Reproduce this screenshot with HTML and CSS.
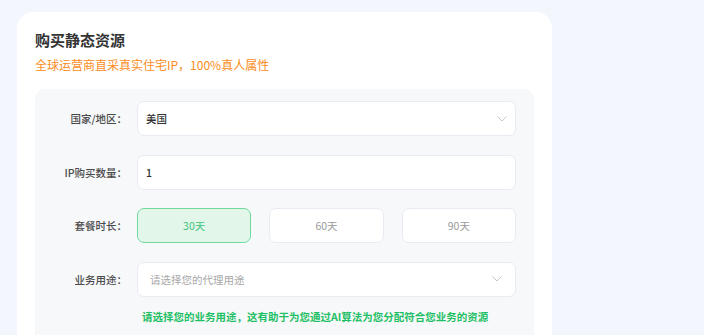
FILE: index.html
```html
<!DOCTYPE html>
<html lang="zh">
<head>
<meta charset="utf-8">
<link rel="stylesheet" href="styles.css">
</head>
<body>
<div class="card">
  <h1 class="title">购买静态资源</h1>
  <p class="subtitle">全球运营商直采真实住宅IP，100%真人属性</p>
  <div class="panel">
    <div class="row">
      <label class="label">国家/地区：</label>
      <div class="field select country">
        <span class="value">美国</span>
        <svg class="chev" width="10" height="6" viewBox="0 0 10 6"><polyline points="0.5,0.5 5,5 9.5,0.5" fill="none" stroke="#c4c8cf" stroke-width="1"/></svg>
      </div>
    </div>
    <div class="row">
      <label class="label">IP购买数量：</label>
      <div class="field"><span class="value">1</span></div>
    </div>
    <div class="row">
      <label class="label">套餐时长：</label>
      <div class="options">
        <div class="opt active">30天</div>
        <div class="opt">60天</div>
        <div class="opt">90天</div>
      </div>
    </div>
    <div class="row">
      <label class="label">业务用途：</label>
      <div class="field select">
        <span class="placeholder">请选择您的代理用途</span>
        <svg class="chev" width="10" height="6" viewBox="0 0 10 6"><polyline points="0.5,0.5 5,5 9.5,0.5" fill="none" stroke="#c4c8cf" stroke-width="1"/></svg>
      </div>
    </div>
    <div class="hint-row">
      <p class="hint">请选择您的业务用途，这有助于为您通过AI算法为您分配符合您业务的资源</p>
    </div>
  </div>
</div>
</body>
</html>
```
FILE: styles.css
```css
* { box-sizing: border-box; }
html, body { margin: 0; padding: 0; overflow: hidden; }
body {
  background: #f3f6fd;
  font-family: "Noto Sans CJK SC", "Noto Sans", sans-serif;
  padding: 12px 0 0 17px;
  height: 335px;
}
.card {
  width: 535px;
  height: 323px;
  overflow: hidden;
  background: #fff;
  border-radius: 16px 16px 0 0;
  padding: 18px 18px 0 18px;
}
.title {
  margin: 0;
  font-size: 15px;
  line-height: 20px;
  font-weight: 700;
  color: #333;
}
.subtitle {
  margin: 6px 0 0 0;
  font-size: 12px;
  line-height: 18px;
  color: #fb8c21;
}
.panel {
  margin-top: 15px;
  background: #f7f8fa;
  border-radius: 10px;
  padding: 12px 18px 20px 0;
  display: grid;
  row-gap: 18.6px;
}
.row {
  display: grid;
  grid-template-columns: 92px 1fr;
  column-gap: 10px;
  align-items: center;
  height: 35px;
}
.label {
  text-align: right;
  font-size: 10.5px;
  font-weight: 500;
  color: #4a4a4a;
  white-space: nowrap;
}
.field {
  height: 35px;
  background: #fff;
  border: 1px solid #e8ebf1;
  border-radius: 7px;
  display: flex;
  align-items: center;
  justify-content: space-between;
  padding: 0 13px 0 8px;
  font-size: 10.5px;
}
.field.country { padding-right: 8px; }
.value { color: #333; font-weight: 500; }
.placeholder { color: #a8a8a8; padding-left: 4px; }
.chev { display: block; }
.options {
  display: grid;
  grid-template-columns: repeat(3, 1fr);
  column-gap: 18px;
}
.opt {
  height: 35px;
  border: 1px solid #e8ebf1;
  border-radius: 7px;
  background: #fff;
  color: #9a9a9a;
  font-size: 10.5px;
  display: flex;
  align-items: center;
  justify-content: center;
}
.opt.active {
  background: #e2f6ea;
  border-color: #6fdb9c;
  color: #3cc57a;
}
.hint-row {
  margin-top: -5px;
  padding-left: 107px;
}
.hint {
  margin: 0;
  font-size: 10.5px;
  line-height: 14px;
  font-weight: 700;
  color: #1fc065;
  white-space: nowrap;
}
```
